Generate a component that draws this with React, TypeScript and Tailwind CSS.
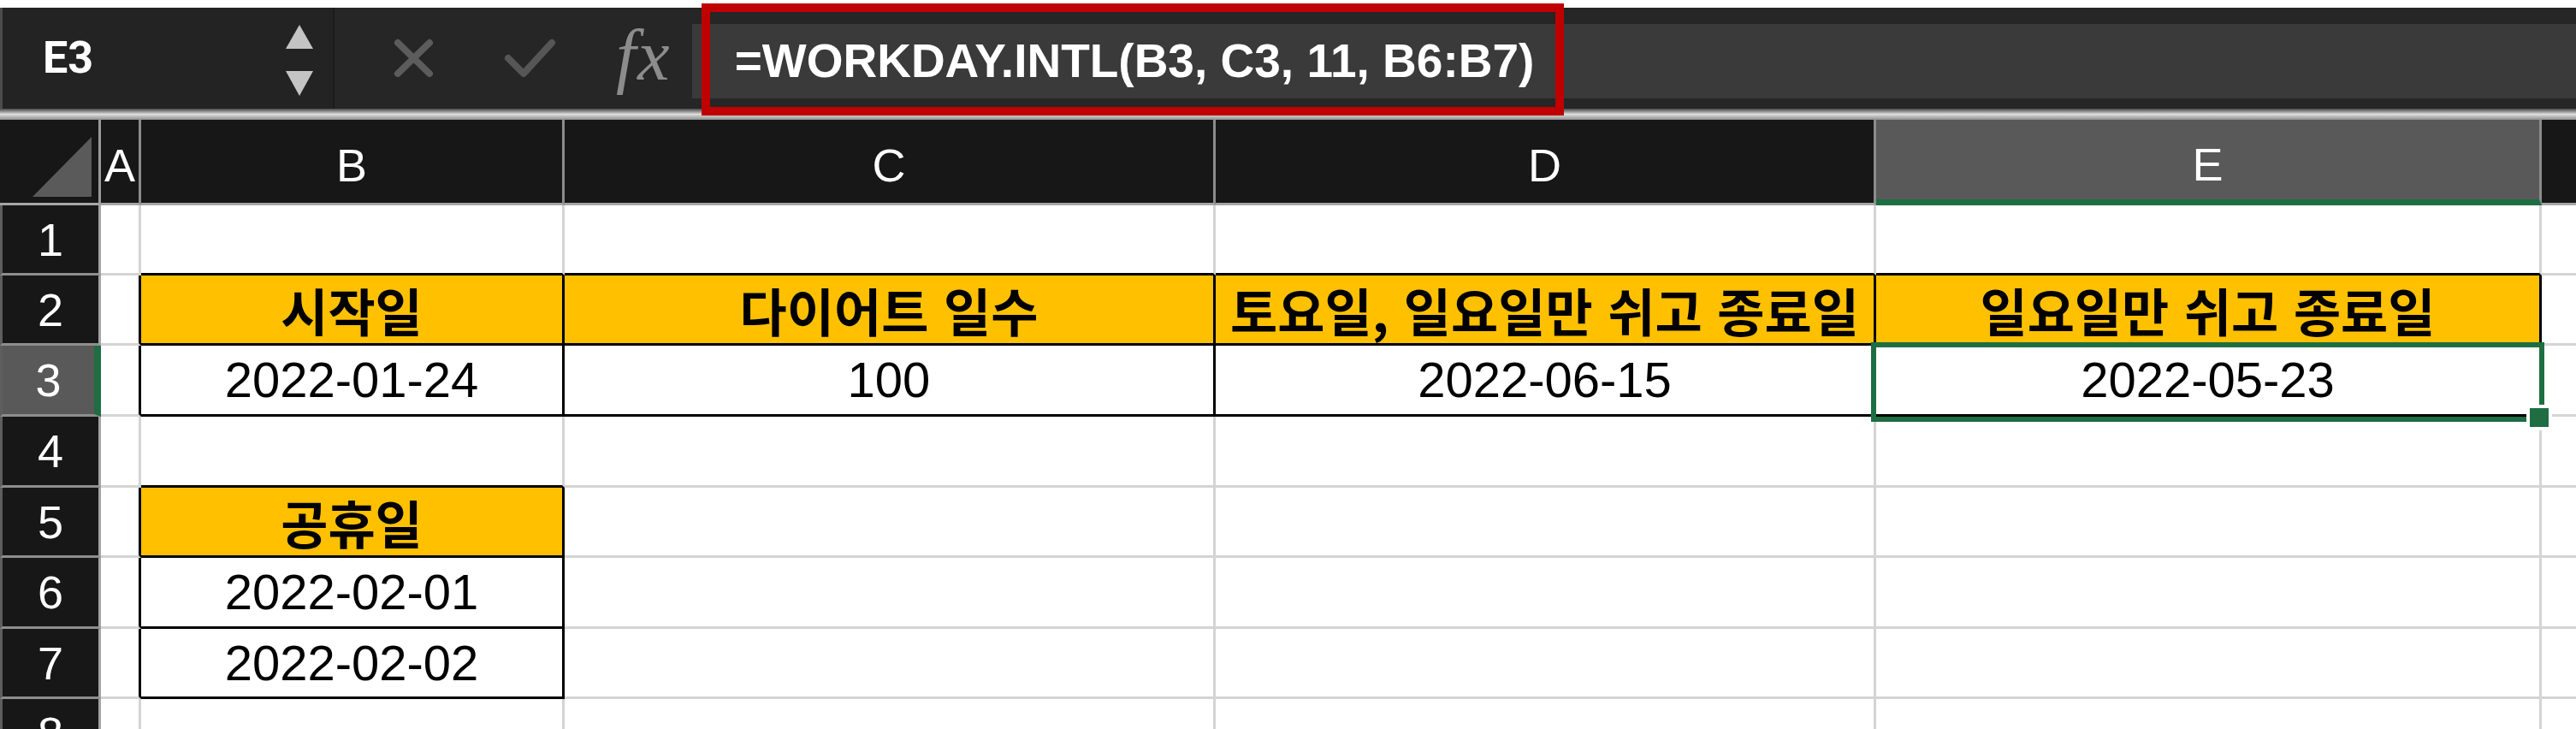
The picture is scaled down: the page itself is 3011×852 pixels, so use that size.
import React from "react";

const RB: Record<string, string> = {
  g: "border-r-[#d4d4d4]",
  k: "border-r-black",
  h: "border-r-[#a3a3a3]",
};
const BB: Record<string, string> = {
  g: "border-b-[#d4d4d4]",
  k: "border-b-black",
  h: "border-b-[#8e8e8e]",
};

function Cell({
  w,
  r = "g",
  b = "g",
  bg = "bg-white",
  kind = "date",
  children,
}: {
  w: string;
  r?: string;
  b?: string;
  bg?: string;
  kind?: "date" | "kr";
  children?: React.ReactNode;
}) {
  const font =
    kind === "kr"
      ? "font-['Noto_Sans_CJK_KR',sans-serif] font-bold text-[60px] [word-spacing:4px]"
      : "font-['Liberation_Sans',Arial,sans-serif] text-[58px]";
  return (
    <div
      className={`${w} h-full shrink-0 border-r-[3px] border-b-[3px] ${RB[r]} ${BB[b]} ${bg} flex items-center justify-center overflow-visible whitespace-nowrap text-black leading-none ${font}`}
    >
      {children}
    </div>
  );
}

function RowHead({ n, active = false }: { n: number; active?: boolean }) {
  return (
    <div
      className={`w-[118px] h-full shrink-0 border-l-[3px] border-l-[#5e5e5e] border-b-[3px] border-b-[#8e8e8e] ${
        active
          ? "bg-[#595959] border-r-[8px] border-r-[#1f6d42]"
          : "bg-[#171717] border-r-[3px] border-r-[#a3a3a3]"
      } flex items-center justify-center text-white text-[54px] leading-none font-['Liberation_Sans',Arial,sans-serif]`}
    >
      {n}
    </div>
  );
}

function Row({ h, children }: { h: string; children: React.ReactNode }) {
  return <div className={`flex ${h} w-full`}>{children}</div>;
}

function Flex({ r = "g", b = "g" }: { r?: string; b?: string }) {
  return (
    <div
      className={`flex-1 h-full border-b-[3px] ${BB[b]} ${RB[r]} bg-white`}
    />
  );
}

export default function App() {
  return (
    <div className="relative w-[3011px] h-[852px] overflow-hidden bg-white font-['Liberation_Sans',Arial,sans-serif]">
      <div className="h-[9px] bg-white" />
      {/* toolbar */}
      <div className="h-[118px] flex bg-[#262626] border-l-[3px] border-l-[#4b4b4b]">
        <div className="w-[388px] shrink-0 bg-[#232323] border-r-2 border-r-[#1b1b1b] flex items-center">
          <span className="ml-[47px] text-white font-['Roboto',sans-serif] font-bold text-[52px] leading-none">
            E3
          </span>
          <div className="ml-auto mr-[22px] flex flex-col gap-[24px] mt-[4px]">
            <svg width="34" height="30" viewBox="0 0 34 30">
              <polygon points="17,1 33,29 1,29" fill="#c4c4c4" />
            </svg>
            <svg width="34" height="31" viewBox="0 0 34 31">
              <polygon points="1,1 33,1 17,30" fill="#c4c4c4" />
            </svg>
          </div>
        </div>
        <div className="ml-[69px] flex items-center">
          <svg width="47" height="46" viewBox="0 0 47 46">
            <path
              d="M5 5 L42 41 M42 5 L5 41"
              stroke="#5c5c5c"
              strokeWidth="8"
              strokeLinecap="round"
            />
          </svg>
        </div>
        <div className="ml-[82px] flex items-center">
          <svg width="61" height="48" viewBox="0 0 61 48">
            <path
              d="M5 24 L23 42 L56 6"
              fill="none"
              stroke="#565656"
              strokeWidth="8"
              strokeLinecap="round"
              strokeLinejoin="round"
            />
          </svg>
        </div>
        <div className="ml-[70px] flex items-center">
          <span className="font-['Liberation_Serif',serif] italic text-[#8c8c8c] text-[84px] leading-none tracking-[2px] -mt-[6px]">
            fx
          </span>
        </div>
        <div className="ml-[24px] flex-1 self-start mt-[19px] h-[87px] bg-[#3a3a3a] flex items-center pl-[50px]">
          <span className="text-white font-bold text-[55px] leading-none whitespace-nowrap">
            =WORKDAY.INTL(B3, C3, 11, B6:B7)
          </span>
        </div>
      </div>
      {/* separator */}
      <div className="h-[13px] bg-gradient-to-b from-[#4a4a4a] via-[#dedede] to-[#8f8f8f]" />

      {/* grid */}
      <div className="flex flex-col">
        {/* header row */}
        <div className="flex h-[100px] w-full bg-[#171717] text-white text-[54px] leading-none">
          <div className="w-[118px] h-full shrink-0 border-r-[3px] border-r-[#9a9a9a] border-b-[3px] border-b-[#a6a6a6] flex items-end justify-end pr-[8px] pb-[7px]">
            <svg width="69" height="70" viewBox="0 0 69 70">
              <polygon points="69,0 69,70 0,70" fill="#5a5a5a" />
            </svg>
          </div>
          <div className="w-[47px] h-full shrink-0 border-r-[3px] border-r-[#8c8c8c] border-b-[3px] border-b-[#a6a6a6] flex items-center justify-center pt-[8px] overflow-visible">
            A
          </div>
          <div className="w-[495px] h-full shrink-0 border-r-[3px] border-r-[#8c8c8c] border-b-[3px] border-b-[#a6a6a6] flex items-center justify-center pt-[8px]">
            B
          </div>
          <div className="w-[761px] h-full shrink-0 border-r-[3px] border-r-[#8c8c8c] border-b-[3px] border-b-[#a6a6a6] flex items-center justify-center pt-[8px]">
            C
          </div>
          <div className="w-[772px] h-full shrink-0 border-r-[3px] border-r-[#8c8c8c] border-b-[3px] border-b-[#a6a6a6] flex items-center justify-center pt-[8px]">
            D
          </div>
          <div className="w-[778px] h-full shrink-0 bg-[#595959] border-r-[3px] border-r-[#8c8c8c] border-b-[7px] border-b-[#1f6d42] flex items-center justify-center pt-[10px]">
            E
          </div>
          <div className="flex-1 h-full border-b-[3px] border-b-[#a6a6a6]" />
        </div>

        {/* row 1 */}
        <Row h="h-[82px]">
          <RowHead n={1} />
          <Cell w="w-[47px]" />
          <Cell w="w-[495px]" b="k" />
          <Cell w="w-[761px]" b="k" />
          <Cell w="w-[772px]" b="k" />
          <Cell w="w-[778px]" b="k" />
          <Flex />
        </Row>
        {/* row 2 */}
        <Row h="h-[82px]">
          <RowHead n={2} />
          <Cell w="w-[47px]" r="k" />
          <Cell w="w-[495px]" r="k" b="k" bg="bg-[#ffc000]" kind="kr">
            시작일
          </Cell>
          <Cell w="w-[761px]" r="k" b="k" bg="bg-[#ffc000]" kind="kr">
            다이어트 일수
          </Cell>
          <Cell w="w-[772px]" r="k" b="k" bg="bg-[#ffc000]" kind="kr">
            토요일, 일요일만 쉬고 종료일
          </Cell>
          <Cell w="w-[778px]" r="k" b="k" bg="bg-[#ffc000]" kind="kr">
            일요일만 쉬고 종료일
          </Cell>
          <Flex />
        </Row>
        {/* row 3 */}
        <Row h="h-[83px]">
          <RowHead n={3} active />
          <Cell w="w-[47px]" r="k" />
          <Cell w="w-[495px]" r="k" b="k">
            2022-01-24
          </Cell>
          <Cell w="w-[761px]" r="k" b="k">
            100
          </Cell>
          <Cell w="w-[772px]" r="k" b="k">
            2022-06-15
          </Cell>
          <Cell w="w-[778px]" r="k" b="k">
            2022-05-23
          </Cell>
          <Flex />
        </Row>
        {/* row 4 */}
        <Row h="h-[83px]">
          <RowHead n={4} />
          <Cell w="w-[47px]" />
          <Cell w="w-[495px]" b="k" />
          <Cell w="w-[761px]" />
          <Cell w="w-[772px]" />
          <Cell w="w-[778px]" />
          <Flex />
        </Row>
        {/* row 5 */}
        <Row h="h-[82px]">
          <RowHead n={5} />
          <Cell w="w-[47px]" r="k" />
          <Cell w="w-[495px]" r="k" b="k" bg="bg-[#ffc000]" kind="kr">
            공휴일
          </Cell>
          <Cell w="w-[761px]" />
          <Cell w="w-[772px]" />
          <Cell w="w-[778px]" />
          <Flex />
        </Row>
        {/* row 6 */}
        <Row h="h-[83px]">
          <RowHead n={6} />
          <Cell w="w-[47px]" r="k" />
          <Cell w="w-[495px]" r="k" b="k">
            2022-02-01
          </Cell>
          <Cell w="w-[761px]" />
          <Cell w="w-[772px]" />
          <Cell w="w-[778px]" />
          <Flex />
        </Row>
        {/* row 7 */}
        <Row h="h-[82px]">
          <RowHead n={7} />
          <Cell w="w-[47px]" r="k" />
          <Cell w="w-[495px]" r="k" b="k">
            2022-02-02
          </Cell>
          <Cell w="w-[761px]" />
          <Cell w="w-[772px]" />
          <Cell w="w-[778px]" />
          <Flex />
        </Row>
        {/* row 8 */}
        <Row h="h-[82px]">
          <RowHead n={8} />
          <Cell w="w-[47px]" />
          <Cell w="w-[495px]" />
          <Cell w="w-[761px]" />
          <Cell w="w-[772px]" />
          <Cell w="w-[778px]" />
          <Flex />
        </Row>
      </div>

      {/* red highlight box around formula */}
      <div className="absolute left-[820px] top-[4px] w-[1008px] h-[131px] border-[10px] border-[#c00000]" />

      {/* selection on E3 */}
      <div className="absolute left-[2187px] top-[400px] w-[787px] h-[93px] border-[6px] border-[#1f6d42]" />
      <div className="absolute left-[2953px] top-[473px] w-[30px] h-[30px] bg-[#1f6d42] border-[4px] border-white" />
    </div>
  );
}
